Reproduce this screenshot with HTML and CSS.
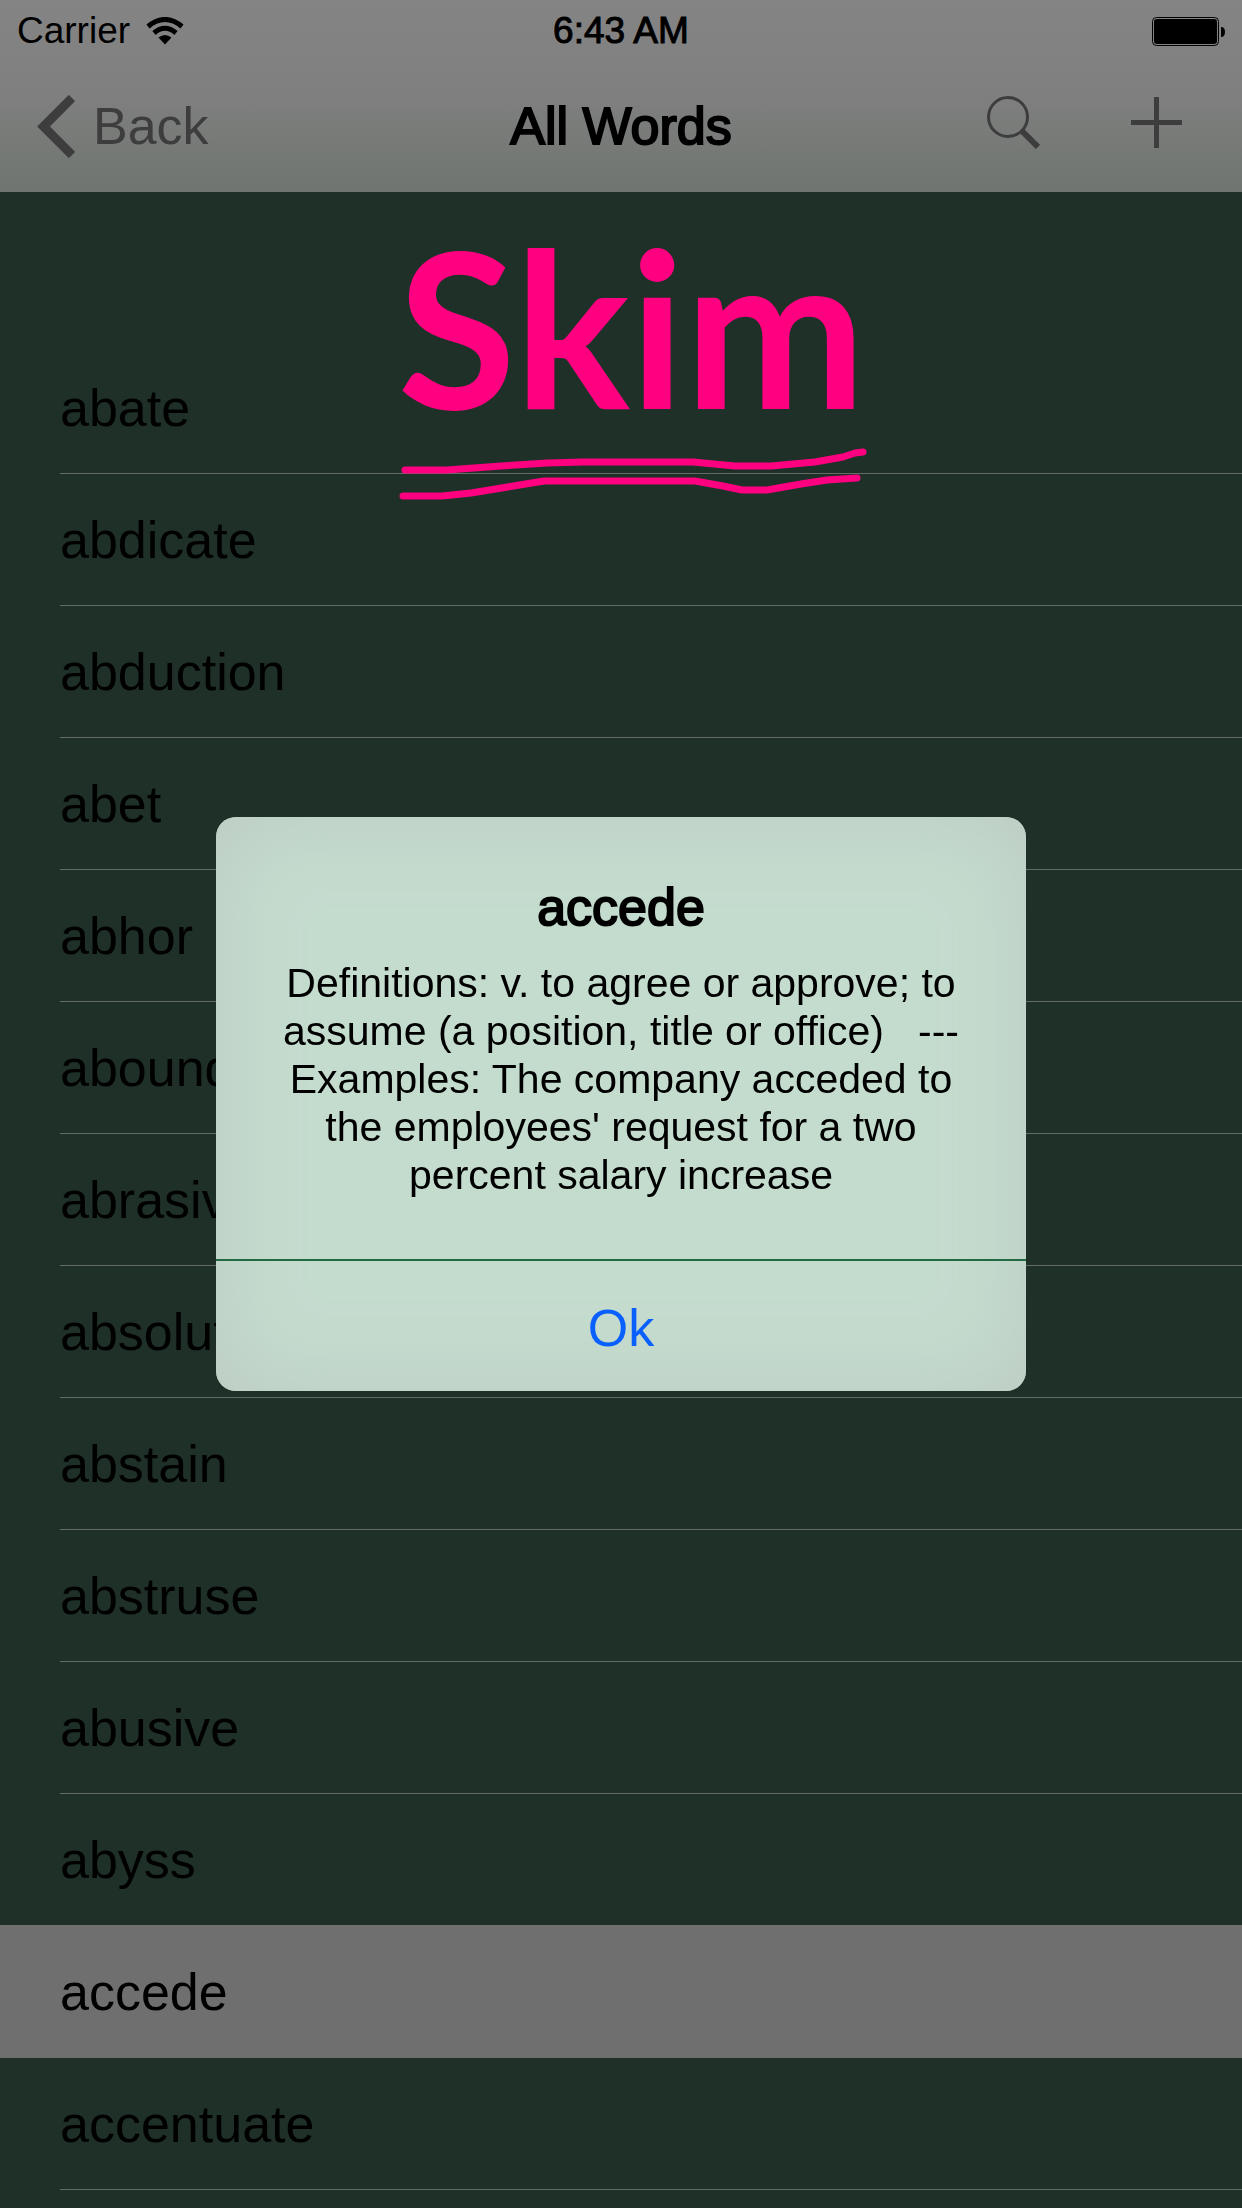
FILE: index.html
```html
<!DOCTYPE html>
<html lang="en">
<head>
  <meta charset="UTF-8">
  <meta name="viewport" content="width=device-width, initial-scale=1.0">
  <title>All Words</title>
  <link rel="stylesheet" href="styles.css">
</head>
<body>
  <header class="top">
    <div class="status-bar">
      <div class="carrier">
        <span>Carrier</span>
        <svg width="38" height="28" viewBox="0 0 38 28">
          <path d="M2 9.500 Q19 -4.500 36 9.500" fill="none" stroke="#000" stroke-width="5"/>
          <path d="M8 16 Q19 6.500 30 16" fill="none" stroke="#000" stroke-width="5"/>
          <path d="M12.500 20.500 Q19 15.500 25.500 20.500 L19 27.500 Z"/>
        </svg>
      </div>
      <span class="time">6:43 AM</span>
      <svg class="battery" width="73" height="29" viewBox="0 0 73 29">
        <rect x="0.500" y="0.500" width="66" height="28" rx="4" fill="none" stroke="#000"/>
        <rect x="2" y="2" width="63" height="25" rx="3"/>
        <path d="M69 10 Q73 10 73 15 Q73 20 69 20 Z"/>
      </svg>
    </div>
    <nav class="nav-bar">
      <button class="nav-button back">
        <svg width="38" height="63" viewBox="0 0 38 63">
          <path d="M35 3 L6.500 31.500 L35 60" fill="none" stroke="#3d3d3d" stroke-width="9"/>
        </svg>
        Back
      </button>
      <h1>All Words</h1>
      <div class="actions">
        <button class="nav-button" aria-label="Search">
          <svg width="53" height="53" viewBox="0 0 53 53" fill="none" stroke="#3d3d3d">
            <circle cx="21" cy="21" r="19.500" stroke-width="3"/>
            <path d="M34.500 34.500 L51 51" stroke-width="6"/>
          </svg>
        </button>
        <button class="nav-button" aria-label="Add">
          <svg width="51" height="51" viewBox="0 0 51 51" stroke="#3d3d3d" stroke-width="5">
            <path d="M25.500 0 V51 M0 25.500 H51"/>
          </svg>
        </button>
      </div>
    </nav>
  </header>

  <main class="words">
    <ul>
      <li>abate</li>
      <li>abdicate</li>
      <li>abduction</li>
      <li>abet</li>
      <li>abhor</li>
      <li>abound</li>
      <li>abrasive</li>
      <li>absolute</li>
      <li>abstain</li>
      <li>abstruse</li>
      <li>abusive</li>
      <li>abyss</li>
      <li class="selected">accede</li>
      <li>accentuate</li>
    </ul>

    <!-- hand-drawn note over the list -->
    <div class="note">
      <span>Skim</span>
      <svg width="476" height="56" viewBox="0 0 476 56" fill="none" stroke="#ff0080" stroke-width="7" stroke-linecap="round" stroke-linejoin="round">
        <path d="M8 26 H50 L104 22 L150 19 L186 18 H296 L338 22 H374 L418 18 L446 13 L458 9 L466 8"/>
        <path d="M6 52 H45 L74 49 L147 37 H298 L326 42 L345 46 H370 L404 40 L430 36 L460 34"/>
      </svg>
    </div>
  </main>

  <div class="overlay">
    <div class="alert" role="alertdialog" aria-labelledby="word" aria-describedby="definition">
      <h2 id="word">accede</h2>
      <p id="definition">Definitions: v. to agree or approve; to<br>assume (a position, title or office) &nbsp; ---<br>Examples: The company acceded to<br>the employees' request for a two<br>percent salary increase</p>
      <button class="ok">Ok</button>
    </div>
  </div>
</body>
</html>
```
FILE: styles.css
```css
* {
  box-sizing: border-box;
}
body {
  margin: 0;
  min-height: 100vh;
  background-color: #1f3028;
  color: black;
  font-family: "Liberation Sans", Arial, sans-serif;
  font-size: 52px;
}
svg {
  display: block;
}
button {
  border: none;
  padding: 0;
  background: none;
  font: inherit;
  cursor: pointer;
}
h1,
h2,
.time {
  margin: 0;
  font-weight: normal;
  -webkit-text-stroke: 2px black;
}
h1,
h2 {
  font-size: 52px;
}
.top {
  background: linear-gradient(#848484, #808080 45%, #6f7570);
}
.status-bar,
.nav-bar {
  display: grid;
  grid-template-columns: 1fr auto 1fr;
  align-items: center;
}
.status-bar {
  height: 60px;
  padding: 2px 17px 0;
  font-size: 37px;
}
.time {
  -webkit-text-stroke-width: 1px;
}
.carrier {
  display: flex;
  align-items: center;
  gap: 16px;
}
.battery {
  justify-self: end;
}
.nav-bar {
  height: 132px;
  padding: 0 60px 0 37px;
}
.nav-button {
  color: #3d3d3d;
}
.back {
  display: flex;
  align-items: center;
  gap: 18px;
}
.nav-bar h1 {
  margin-right: -23px;
}
.actions {
  display: flex;
  justify-content: flex-end;
  gap: 91px;
  padding-bottom: 8px;
}
.words {
  position: relative;
  padding-top: 150px;
}
.words ul {
  margin: 0;
  padding: 0;
  list-style: none;
}
.words li {
  height: 132px;
  padding-left: 60px;
  line-height: 132px;
  background: linear-gradient(#656b67, #656b67) 60px 100% / 100% 1px no-repeat;
}
.words .selected {
  background: #6f6f6f;
  box-shadow: 0 -1px #6f6f6f;
}
.note {
  position: absolute;
  top: 48px;
  left: 32%;
}
.note span {
  display: block;
  height: 204px;
  color: #ff0080;
  font-family: Lato, sans-serif;
  font-size: 216px;
  font-weight: bold;
  line-height: 172px;
}
.overlay {
  position: fixed;
  inset: 0;
  display: flex;
  align-items: center;
  justify-content: center;
}
.alert {
  width: 810px;
  max-width: 90%;
  border-radius: 20px;
  overflow: hidden;
  background-color: #c4dcce;
  box-shadow: inset 0 0 90px #bdcbc3;
  text-align: center;
}
.alert h2 {
  padding-top: 60px;
  line-height: 60px;
}
.alert p {
  margin: 22px 0 60px;
  font-size: 41px;
  line-height: 48px;
}
.ok {
  width: 100%;
  height: 132px;
  padding-top: 4px;
  border-top: 2px solid #226a42;
  color: #0a60ff;
}
```
